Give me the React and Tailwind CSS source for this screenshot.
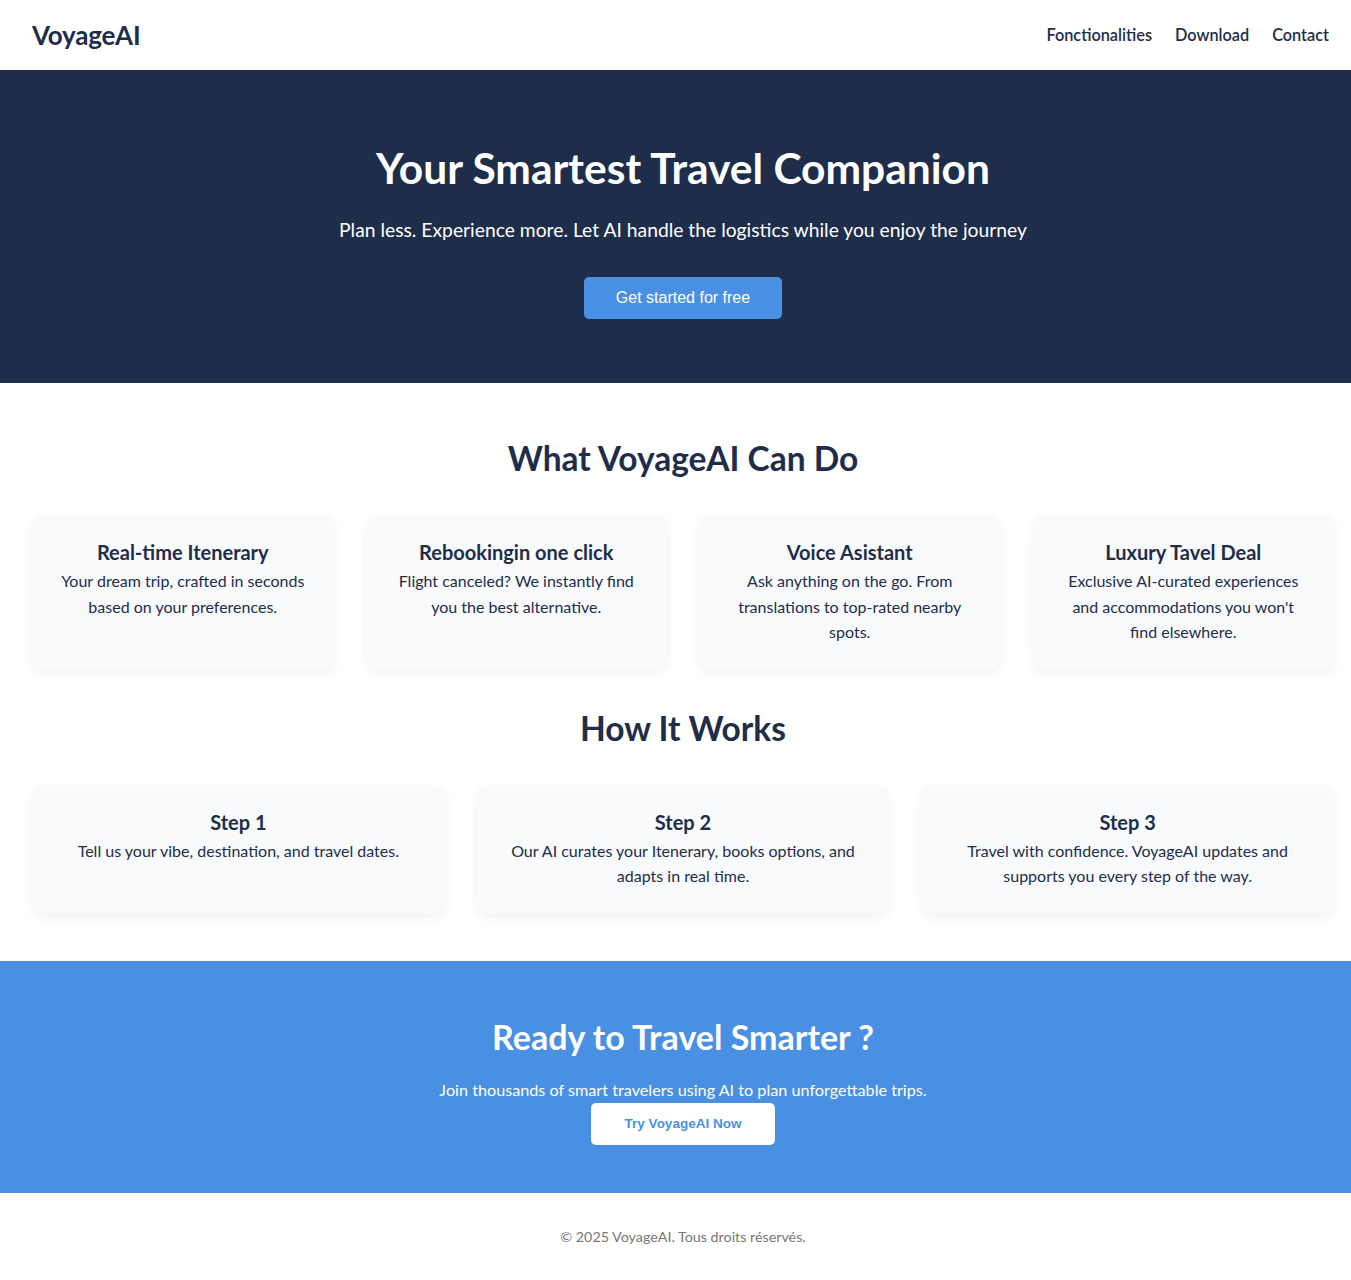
const features = [
  {
    title: 'Real-time Itenerary',
    text: 'Your dream trip, crafted in seconds based on your preferences.',
  },
  {
    title: 'Rebookingin one click',
    text: 'Flight canceled? We instantly find you the best alternative.',
  },
  {
    title: 'Voice Asistant',
    text: 'Ask anything on the go. From translations to top-rated nearby spots.',
  },
  {
    title: 'Luxury Tavel Deal',
    text: "Exclusive AI-curated experiences and accommodations you won't find elsewhere.",
  },
];

const steps = [
  { title: 'Step 1', text: 'Tell us your vibe, destination, and travel dates.' },
  { title: 'Step 2', text: 'Our AI curates your Itenerary, books options, and adapts in real time.' },
  { title: 'Step 3', text: 'Travel with confidence. VoyageAI updates and supports you every step of the way.' },
];

const Card = ({ title, text, pad }) => (
  <div className={`bg-[#f8fafc] rounded-xl shadow-[0_4px_12px_rgba(0,0,0,0.06)] text-center py-6 ${pad}`}>
    <h3 className="text-[20px] font-bold leading-[27px] mb-[2px]">{title}</h3>
    <p className="text-[16px] leading-[25.6px]">{text}</p>
  </div>
);

export default function App() {
  return (
    <div className="overflow-x-hidden">
      <div className="w-[1366px] text-[#1e2d4a] font-['Segoe_UI','Lato','Open_Sans',sans-serif]">
        {/* Header */}
        <header className="h-[70px] bg-white flex items-center justify-between pl-8 pr-[37px]">
          <div className="text-[26px] font-bold tracking-[-0.2px]">VoyageAI</div>
          <nav className="flex items-center gap-[23px] text-[16.3px] font-semibold">
            <a href="#features">Fonctionalities</a>
            <a href="#download">Download</a>
            <a href="#contact">Contact</a>
          </nav>
        </header>

        {/* Hero */}
        <section className="bg-[#1e2d4a] text-white text-center h-[313px] pt-[68px]">
          <h1 className="text-[42.5px] font-bold leading-[60px]">Your Smartest Travel Companion</h1>
          <p className="text-[19.3px] leading-[30px] mt-[17px]">
            Plan less. Experience more. Let AI handle the logistics while you enjoy the journey
          </p>
          <button className="mt-[32px] w-[198px] h-[42px] bg-[#4a90e2] rounded-[5px] text-[16px] font-['Liberation_Sans',Arial,sans-serif] text-white">
            Get started for free
          </button>
        </section>

        {/* Features */}
        <section id="features" className="px-8 pt-[56px] pb-[40px]">
          <h2 className="text-center text-[33.5px] font-bold leading-[38px]">What VoyageAI Can Do</h2>
          <div className="grid grid-cols-4 gap-8 mt-[38px]">
            {features.map((f) => (
              <Card key={f.title} {...f} pad="px-[26px]" />
            ))}
          </div>

          <h2 className="text-center text-[33.5px] font-bold leading-[38px] mt-[40px]">How It Works</h2>
          <div className="grid grid-cols-3 gap-8 mt-[38px]">
            {steps.map((s) => (
              <Card key={s.title} {...s} pad="px-8" />
            ))}
          </div>
        </section>

        {/* CTA */}
        <section id="download" className="bg-[#4a90e2] text-white text-center h-[232px] pt-[56px] mt-[8px]">
          <h2 className="text-[34px] font-bold leading-[40px]">Ready to Travel Smarter ?</h2>
          <p className="text-[16.2px] leading-[24px] mt-[21px]">
            Join thousands of smart travelers using AI to plan unforgettable trips.
          </p>
          <button className="mt-[1px] w-[184px] h-[42px] bg-white rounded-[5px] text-[13.5px] font-bold text-[#4a90e2] font-['Liberation_Sans',Arial,sans-serif]">
            Try VoyageAI Now
          </button>
        </section>

        {/* Footer */}
        <footer id="contact" className="h-[87px] flex items-center justify-center text-[14.3px] text-[#777]">
          © 2025 VoyageAI. Tous droits réservés.
        </footer>
      </div>
    </div>
  );
}
